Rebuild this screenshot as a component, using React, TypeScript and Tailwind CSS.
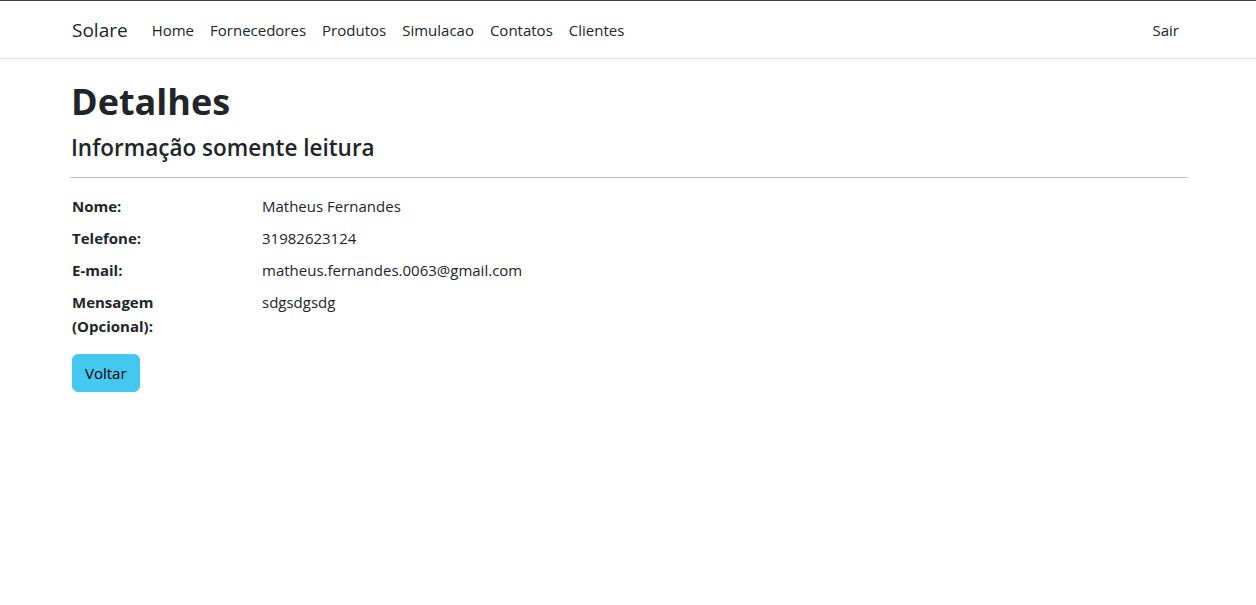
import React from "react";

const links = ["Home", "Fornecedores", "Produtos", "Simulacao", "Contatos", "Clientes"];

const fields: { label: string; value: string }[] = [
  { label: "Nome:", value: "Matheus Fernandes" },
  { label: "Telefone:", value: "31982623124" },
  { label: "E-mail:", value: "matheus.fernandes.0063@gmail.com" },
  { label: "Mensagem (Opcional):", value: "sdgsdgsdg" },
];

export default function App() {
  return (
    <div
      className="min-h-[605px] bg-white text-[#212529]"
      style={{ fontFamily: '"Open Sans", sans-serif' }}
    >
      {/* Navbar */}
      <nav className="border-t border-t-[#444] border-b border-b-[#dee2e6] bg-white shadow-[0_2px_4px_rgba(0,0,0,0.04)]">
        <div className="mx-auto flex h-[57px] w-[1140px] items-center px-3">
          <span className="mr-4 pl-[2px] text-[19px] leading-[30px]">Solare</span>
          <ul className="flex">
            {links.map((l) => (
              <li key={l}>
                <a className="block px-2 py-2 text-[15px] leading-6">{l}</a>
              </li>
            ))}
          </ul>
          <a className="ml-auto mr-[-1px] block px-2 py-2 text-[15px] leading-6">Sair</a>
        </div>
      </nav>

      {/* Content */}
      <main className="mx-auto w-[1140px] px-3 pt-[19px]">
        <h1 className="mb-2 pl-[1px] text-[36px] font-bold leading-[48px]">Detalhes</h1>
        <h4 className="mb-2 pl-[1px] text-[22.5px] font-semibold leading-[27px]">Informação somente leitura</h4>
        <hr className="my-4 mr-[-2px] border-t border-[#c6c7c8]" />
        <dl className="mb-2">
          {fields.map((f) => (
            <div key={f.label} className="flex">
              <dt className="mb-2 w-[190px] shrink-0 pl-[2px] pr-6 text-[15px] font-bold leading-6">{f.label}</dt>
              <dd className="mb-2 pl-[2px] text-[15px] leading-6">{f.value}</dd>
            </div>
          ))}
        </dl>
        <button className="ml-[2px] rounded-md border border-[#45c8ef] bg-[#45c8ef] px-3 py-1.5 text-[15px] leading-6 text-black">
          Voltar
        </button>
      </main>
    </div>
  );
}
